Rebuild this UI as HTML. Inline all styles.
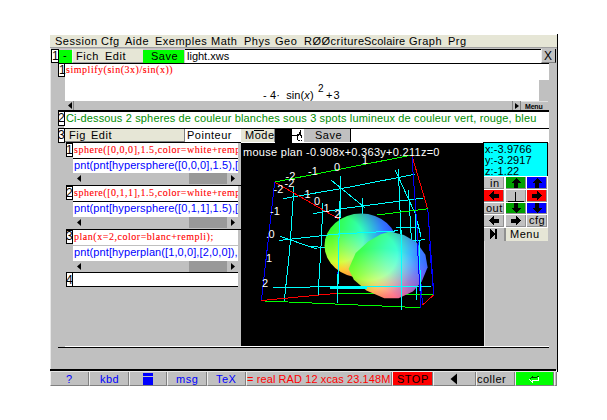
<!DOCTYPE html>
<html><head><meta charset="utf-8">
<style>
html,body{margin:0;padding:0;background:#fff;width:607px;height:420px;overflow:hidden;position:relative}
body{font-family:"Liberation Sans",sans-serif;font-size:11px;line-height:13px;color:#000}
.a{position:absolute;box-sizing:border-box}
.t{position:absolute;white-space:pre;line-height:13px;letter-spacing:0.1px}
.m{letter-spacing:0.5px}
.g{background:#c0c0c0}
.cr{background:#e6e6d6}
.w{background:#fff}
.k{background:#000}
.serif{font-family:"Liberation Serif",serif;-webkit-text-stroke:0.1px #f00}
</style></head><body>
<!-- window base -->
<div class="a g" style="left:50px;top:35px;width:507px;height:335px"></div>
<div class="a k" style="left:557px;top:34px;width:1px;height:338px"></div>
<div class="a k" style="left:50px;top:369px;width:506px;height:2px"></div>
<div class="a" style="left:50px;top:48px;width:1px;height:321px;background:#e8e8e8"></div>

<!-- menu bar -->
<div class="a cr" style="left:50px;top:35px;width:507px;height:12px"></div>
<div class="a" style="left:50px;top:47px;width:507px;height:1px;background:#a0a0a0"></div>
<div class="t m" style="left:55px;top:35px">Session</div>
<div class="t m" style="left:101px;top:35px">Cfg</div>
<div class="t m" style="left:125px;top:35px">Aide</div>
<div class="t m" style="left:155px;top:35px">Exemples</div>
<div class="t m" style="left:211px;top:35px">Math</div>
<div class="t m" style="left:244px;top:35px">Phys</div>
<div class="t m" style="left:275px;top:35px">Geo</div>
<div class="t m" style="left:304px;top:35px">RØØcriture</div>
<div class="t m" style="left:364px;top:35px;letter-spacing:0.2px">Scolaire</div>
<div class="t m" style="left:409px;top:35px">Graph</div>
<div class="t m" style="left:448px;top:35px">Prg</div>

<!-- tab row -->
<div class="a w" style="left:51px;top:49px;width:8px;height:14px;border:1px solid #000"></div>
<div class="t" style="left:52px;top:50px;font-size:12px;letter-spacing:0">1</div>
<div class="a" style="left:59px;top:49px;width:13px;height:14px;background:#00ff00;border-top:1px solid #d0c0d0"></div>
<div class="t" style="left:63px;top:49px">-</div>
<div class="a cr" style="left:72px;top:49px;width:71px;height:14px;border-left:1px solid #f0f0f0;border-bottom:1px solid #a0a0a0"></div>
<div class="t m" style="left:76px;top:50px">Fich</div>
<div class="t m" style="left:105px;top:50px">Edit</div>
<div class="a" style="left:143px;top:49px;width:42px;height:14px;background:#00ff00;border-top:1px solid #d0c0d0;border-right:1px solid #d0c0d0"></div>
<div class="t m" style="left:151px;top:50px">Save</div>
<div class="a w" style="left:185px;top:49px;width:356px;height:14px;border-top:1px solid #000"></div>
<div class="t" style="left:187px;top:50px;letter-spacing:0">light.xws</div>
<div class="a g" style="left:541px;top:49px;width:15px;height:14px;border-left:1px solid #f0f0f0;border-right:1px solid #000;border-bottom:1px solid #808080"></div>
<div class="t" style="left:544px;top:50px;font-size:12px;letter-spacing:0">X</div>
<div class="a k" style="left:58px;top:63px;width:491px;height:1px"></div>

<!-- level 1 -->
<div class="a w" style="left:65px;top:64px;width:484px;height:37px"></div>
<div class="a g" style="left:539px;top:80px;width:10px;height:21px"></div>
<div class="a w" style="left:58px;top:63px;width:7px;height:14px;border:1px solid #000"></div>
<div class="t" style="left:59px;top:64px;font-size:12px;letter-spacing:0">1</div>
<div class="t serif" style="left:66px;top:63px;color:#f00;font-size:10px;letter-spacing:0.53px">simplify(sin(3x)/sin(x))</div>
<div class="t" style="left:263px;top:89px;font-size:11px">- 4·  sin(<i>x</i>)</div>
<div class="t" style="left:318px;top:82px;font-size:10px">2</div>
<div class="t" style="left:326px;top:89px;font-size:11px;letter-spacing:1px">+3</div>
<!-- scrollbar 1 -->
<div class="a g" style="left:65px;top:101px;width:483px;height:9px"></div>
<div class="a" style="left:73px;top:101px;width:1px;height:9px;background:#808080"></div>
<svg class="a" style="left:66px;top:101px" width="8" height="9"><path d="M2 4.5 L6 1 L6 8 Z" fill="#000"/></svg>
<div class="a" style="left:512px;top:101px;width:9px;height:9px;border-left:1px solid #808080;border-right:1px solid #808080"></div>
<svg class="a" style="left:513px;top:101px" width="8" height="9"><path d="M2 2 L6 5 L2 8 Z" fill="#000"/></svg>
<div class="a" style="left:521px;top:101px;width:27px;height:1px;background:#e0e0e0"></div>
<div class="t" style="left:525px;top:101px;font-size:7px;font-weight:bold;letter-spacing:-0.2px;line-height:12px">Menu</div>

<!-- level 2 -->
<div class="a k" style="left:58px;top:110px;width:491px;height:2px"></div>
<div class="a w" style="left:64px;top:112px;width:485px;height:16px"></div>
<div class="a w" style="left:58px;top:112px;width:7px;height:14px;border-left:1px solid #000;border-right:1px solid #000;border-bottom:1px solid #000"></div>
<div class="t" style="left:58px;top:112px;font-size:12px;letter-spacing:0">2</div>
<div class="t" style="left:66px;top:112px;color:#008c00;letter-spacing:0.15px">Ci-dessous 2 spheres de couleur blanches sous 3 spots lumineux de couleur vert, rouge, bleu</div>

<!-- level 3 -->
<div class="a k" style="left:58px;top:128px;width:491px;height:1px"></div>
<div class="a w" style="left:58px;top:129px;width:7px;height:14px;border-left:1px solid #000;border-right:1px solid #000;border-bottom:1px solid #000"></div>
<div class="t" style="left:58px;top:129px;font-size:12px;letter-spacing:0">3</div>
<div class="a cr" style="left:65px;top:129px;width:120px;height:13px;border-right:1px solid #808080;border-bottom:1px solid #808080"></div>
<div class="t m" style="left:69px;top:129px">Fig</div>
<div class="t m" style="left:91px;top:129px">Edit</div>
<div class="a w" style="left:185px;top:129px;width:364px;height:14px"></div>
<div class="t m" style="left:187px;top:129px">Pointeur</div>
<div class="a cr" style="left:241px;top:129px;width:34px;height:13px;border-right:1px solid #808080"></div>
<div class="t m" style="left:245px;top:129px">Mode</div>
<div class="a k" style="left:254px;top:130px;width:10px;height:1px"></div>
<div class="a k" style="left:275px;top:129px;width:17px;height:14px"></div>
<div class="a w" style="left:292px;top:129px;width:12px;height:13px"></div>
<svg class="a" style="left:292px;top:129px" width="12" height="13"><g fill="#000" shape-rendering="crispEdges">
<rect x="0" y="6" width="7" height="1"/><rect x="8" y="1" width="1" height="3"/><rect x="7" y="3" width="2" height="3"/><rect x="5" y="5" width="2" height="2"/><rect x="8" y="6" width="2" height="1"/><rect x="9" y="7" width="1" height="2"/><rect x="5" y="7" width="1" height="2"/><rect x="5" y="9" width="1" height="2"/><rect x="6" y="11" width="2" height="1"/><rect x="9" y="11" width="1" height="1"/>
</g></svg>
<div class="a g" style="left:304px;top:129px;width:47px;height:13px;border-right:1px solid #000"></div>
<div class="t m" style="left:315px;top:129px">Save</div>

<!-- left panel -->
<div class="a g" style="left:58px;top:143px;width:183px;height:203px"></div>
<!-- sublevel 1 -->
<div class="a k" style="left:66px;top:142px;width:175px;height:1px"></div>
<div class="a w" style="left:73px;top:143px;width:165px;height:15px"></div>
<div class="a w" style="left:66px;top:143px;width:7px;height:14px;border:1px solid #000"></div>
<div class="t" style="left:66px;top:144px;font-size:12px;letter-spacing:0">1</div>
<div class="a" style="left:73px;top:143px;width:165px;height:15px;overflow:hidden"><div class="t serif" style="left:1px;top:0px;color:#f00;font-size:10px;letter-spacing:0.53px">sphere([0,0,0],1.5,color=white+rempli);</div></div>
<div class="a k" style="left:73px;top:158px;width:165px;height:1px"></div>
<div class="a w" style="left:73px;top:159px;width:165px;height:14px"></div>
<div class="a" style="left:73px;top:159px;width:165px;height:15px;overflow:hidden"><div class="t" style="left:1px;top:0px;color:#00f">pnt(pnt[hypersphere([0,0,0],1.5),[</div></div>
<div class="a" style="left:74px;top:173px;width:154px;height:11px;background:#c0c0c0"></div>
<div class="a" style="left:189px;top:173px;width:38px;height:11px;background:#999999"></div>
<svg class="a" style="left:74px;top:173px" width="10" height="11"><path d="M3 5.5 L7 2 L7 9 Z" fill="#000"/></svg>
<svg class="a" style="left:227px;top:173px" width="11" height="11"><path d="M4 2 L8 5.5 L4 9 Z" fill="#000"/></svg>
<!-- sublevel 2 -->
<div class="a k" style="left:66px;top:185px;width:175px;height:1px"></div>
<div class="a w" style="left:73px;top:186px;width:165px;height:15px"></div>
<div class="a w" style="left:66px;top:186px;width:7px;height:14px;border:1px solid #000"></div>
<div class="t" style="left:66px;top:187px;font-size:12px;letter-spacing:0">2</div>
<div class="a" style="left:73px;top:186px;width:165px;height:15px;overflow:hidden"><div class="t serif" style="left:1px;top:0px;color:#f00;font-size:10px;letter-spacing:0.53px">sphere([0,1,1],1.5,color=white+rempli);</div></div>
<div class="a k" style="left:73px;top:201px;width:165px;height:1px"></div>
<div class="a w" style="left:73px;top:202px;width:165px;height:15px"></div>
<div class="a" style="left:73px;top:202px;width:165px;height:15px;overflow:hidden"><div class="t" style="left:1px;top:0px;color:#00f">pnt(pnt[hypersphere([0,1,1],1.5),[</div></div>
<svg class="a" style="left:74px;top:217px" width="10" height="11"><path d="M3 5.5 L7 2 L7 9 Z" fill="#000"/></svg>
<div class="a" style="left:189px;top:217px;width:38px;height:11px;background:#999999"></div>
<svg class="a" style="left:227px;top:217px" width="11" height="11"><path d="M4 2 L8 5.5 L4 9 Z" fill="#000"/></svg>
<!-- sublevel 3 -->
<div class="a k" style="left:66px;top:229px;width:175px;height:1px"></div>
<div class="a w" style="left:73px;top:230px;width:165px;height:15px"></div>
<div class="a w" style="left:66px;top:230px;width:7px;height:14px;border:1px solid #000"></div>
<div class="t" style="left:66px;top:230px;font-size:12px;letter-spacing:0">3</div>
<div class="t serif" style="left:74px;top:230px;color:#f00;font-size:10px;letter-spacing:0.53px">plan(x=2,color=blanc+rempli);</div>
<div class="a w" style="left:73px;top:246px;width:165px;height:15px"></div>
<div class="a" style="left:73px;top:246px;width:165px;height:15px;overflow:hidden"><div class="t" style="left:1px;top:0px;color:#00f">pnt(pnt[hyperplan([1,0,0],[2,0,0]),[</div></div>
<svg class="a" style="left:74px;top:261px" width="10" height="11"><path d="M3 5.5 L7 2 L7 9 Z" fill="#000"/></svg>
<div class="a" style="left:189px;top:261px;width:38px;height:11px;background:#999999"></div>
<svg class="a" style="left:227px;top:261px" width="11" height="11"><path d="M4 2 L8 5.5 L4 9 Z" fill="#000"/></svg>
<!-- level 4 -->
<div class="a w" style="left:66px;top:272px;width:172px;height:15px;border-top:1px solid #000;border-bottom:1px solid #000"></div>
<div class="a w" style="left:66px;top:272px;width:7px;height:15px;border:1px solid #000"></div>
<div class="t" style="left:66px;top:274px;font-size:12px;letter-spacing:0">4</div>

<!-- graph -->

<div class="a" style="left:241px;top:143px;width:243px;height:203px;overflow:hidden;background:#000">
<svg width="242" height="203" viewBox="241 143 242 203" style="position:absolute;left:0;top:0">
<g stroke-width="1" fill="none" shape-rendering="crispEdges">
<!-- back lines -->
<path stroke="#00ffff" d="M283.2 198.6 L345 187.9 L415.3 174.2"/>
<path stroke="#00ffff" d="M294 186.8 L289.7 250 L284.3 300.5"/>
<path stroke="#00ffff" d="M323 202.9 L320.8 250 L318 295.7"/>
<path stroke="#00ffff" d="M313.3 213.6 L345 208.3 L423.2 198"/>
<path stroke="#00ffff" d="M279 240.5 L345 233"/>
<path stroke="#00ffff" d="M280 236.2 L316.5 249"/>
<path stroke="#00ffff" d="M331.5 180.4 L365.5 208.2"/>
<path stroke="#00ffff" d="M340.7 176.5 L339.5 250 L337.2 303"/>
<path stroke="#00ffff" d="M398.3 168.6 L401.7 250"/>
<path stroke="#00ffff" d="M395 169.7 L415.3 213.8 L421 236.4"/>
<path stroke="#00ffff" d="M408.5 190 L412 250"/>
<path stroke="#00ffff" d="M396 227.4 L418.7 227"/>
<path stroke="#00ffff" d="M400.6 241 L425.5 239.8"/>
<path stroke="#00ffff" d="M362 198 L362 213.8"/>
<path stroke="#00ffff" d="M415.3 208.2 L417 300"/>
<path stroke="#00ffff" d="M310.8 246.4 L325.2 247.6"/>
<path stroke="#0000ff" d="M340 220.5 L337.2 293.3"/>
<path stroke="#ff0000" d="M274.7 182.1 L339 219"/>
<path stroke="#00ff00" d="M274.7 182.1 L412 155"/>
<path stroke="#ff0000" d="M412 156 L427.8 209.3"/>
<path stroke="#0000ff" d="M412 157.3 L422.5 305"/>
<path stroke="#0000ff" d="M427.8 209.3 L433.8 294.8"/>
<path stroke="#00ff00" d="M376.9 215 L427.8 208.8"/>
<path stroke="#0000ff" d="M274.7 182.1 L261.4 300.5"/>
<path stroke="#ff0000" d="M261.4 300.5 L337.2 293.3"/>
<path stroke="#00ff00" d="M265 301 L421 307.7"/>
<path stroke="#00ff00" d="M337 293.3 L433.8 295"/>
<path stroke="#ff0000" d="M433.8 294.8 L422.5 305"/>
</g>
</svg>
<div style="position:absolute;left:83px;top:70px;width:75px;height:66px;clip-path:polygon(73.5px 32.5px,72.8px 38.7px,70.7px 44.7px,67.3px 50.3px,62.8px 55.1px,57.3px 59.1px,51.0px 62.1px,44.1px 63.9px,37.0px 64.5px,29.9px 63.9px,23.0px 62.1px,16.7px 59.1px,11.2px 55.1px,6.7px 50.3px,3.3px 44.7px,1.2px 38.7px,0.5px 32.5px,1.2px 26.3px,3.3px 20.3px,6.7px 14.7px,11.2px 9.9px,16.7px 5.9px,23.0px 2.9px,29.9px 1.1px,37.0px 0.5px,44.1px 1.1px,51.0px 2.9px,57.3px 5.9px,62.8px 9.9px,67.3px 14.7px,70.7px 20.3px,72.8px 26.3px);background-color:#000;background-image:radial-gradient(ellipse 80% 80% at 25% 105%, rgb(255,0,0) 0%, rgb(255,0,0) 25%, rgb(150,0,0) 60%, rgb(50,0,0) 100%),radial-gradient(ellipse 85% 90% at 20% 40%, rgb(0,255,0) 0%, rgb(0,255,0) 38%, rgb(0,120,0) 72%, rgb(0,50,0) 100%),radial-gradient(ellipse 90% 100% at 100% 30%, rgb(0,0,255) 0%, rgb(0,0,255) 25%, rgb(0,0,190) 55%, rgb(0,0,50) 100%);background-blend-mode:screen,screen,screen"></div>
<div style="position:absolute;left:107px;top:88px;width:81px;height:69px;clip-path:polygon(0.6px 38.0px,7.7px 22.0px,20.2px 10.4px,32.7px 3.3px,41.6px 0.6px,55.9px 4.1px,68.4px 11.3px,77.4px 23.8px,79.6px 36.3px,73.8px 50.6px,64.9px 60.4px,50.6px 67.2px,36.3px 67.2px,18.4px 59.5px,5.9px 48.8px);background-color:#000;background-image:radial-gradient(ellipse 80% 80% at 40% 105%, rgb(255,0,0) 0%, rgb(255,0,0) 25%, rgb(150,0,0) 60%, rgb(60,0,0) 100%),radial-gradient(ellipse 90% 90% at 25% 35%, rgb(0,255,0) 0%, rgb(0,255,0) 40%, rgb(0,130,0) 70%, rgb(0,60,0) 100%),radial-gradient(ellipse 90% 100% at 95% 40%, rgb(0,0,255) 0%, rgb(0,0,255) 20%, rgb(0,0,180) 55%, rgb(0,0,50) 100%);background-blend-mode:screen,screen,screen"></div>
<svg width="242" height="203" viewBox="241 143 242 203" style="position:absolute;left:0;top:0">
<g stroke-width="1" fill="none" shape-rendering="crispEdges">
<path stroke="#00ffff" d="M340.7 176.5 L337.2 303"/>
<path stroke="#00ffff" d="M279 240.5 L335 234.2 L398.3 230.8"/>
<path stroke="#00ffff" d="M273.5 287.3 L433 286"/>
<path stroke="#00ffff" d="M330 287 L367 287" stroke-width="3"/>
<path stroke="#00ffff" d="M401.7 230 L402 310"/>
<path stroke="#00ffff" d="M419 240 L421 300"/>
<path stroke="#0000ff" d="M417.3 244 L421 307.7"/>
<path stroke="#0000ff" d="M429.4 244 L433.8 294.8"/>
</g>
</svg>
<div style="position:absolute;left:2px;top:3px;color:#fff;white-space:pre;line-height:13px;letter-spacing:0.28px">mouse plan -0.908x+0.363y+0.211z=0</div>
<div style="position:absolute;left:44.5px;top:27px;color:#fff;white-space:pre;line-height:13px">-2</div>
<div style="position:absolute;left:43.5px;top:34px;color:#fff;white-space:pre;line-height:13px">-2</div>
<div style="position:absolute;left:32.5px;top:40px;color:#fff;white-space:pre;line-height:13px">-2</div>
<div style="position:absolute;left:67px;top:22px;color:#fff;white-space:pre;line-height:13px">-1</div>
<div style="position:absolute;left:93px;top:18px;color:#fff;white-space:pre;line-height:13px">0</div>
<div style="position:absolute;left:121px;top:11px;color:#fff;white-space:pre;line-height:13px">1</div>
<div style="position:absolute;left:63.5px;top:45px;color:#fff;white-space:pre;line-height:13px">1</div>
<div style="position:absolute;left:73px;top:52px;color:#fff;white-space:pre;line-height:13px">0</div>
<div style="position:absolute;left:82.5px;top:59px;color:#fff;white-space:pre;line-height:13px">1</div>
<div style="position:absolute;left:93.5px;top:65px;color:#fff;white-space:pre;line-height:13px">2</div>
<div style="position:absolute;left:29px;top:62px;color:#fff;white-space:pre;line-height:13px">-1</div>
<div style="position:absolute;left:25px;top:85px;color:#fff;white-space:pre;line-height:13px;letter-spacing:-0.5px">.0</div>
<div style="position:absolute;left:25px;top:109px;color:#fff;white-space:pre;line-height:13px">1</div>
<div style="position:absolute;left:21px;top:134px;color:#fff;white-space:pre;line-height:13px">2</div>

</div>


<!-- right panel -->
<div class="a" style="left:483px;top:142px;width:65px;height:34px;background:#0ff;border-top:1px solid #000;border-left:1px solid #000;border-right:1px solid #000"></div>
<div class="t" style="left:485px;top:143px">x:-3.9766</div>
<div class="t" style="left:485px;top:154px">y:-3.2917</div>
<div class="t" style="left:485px;top:165px">z:-1.22</div>
<div class="a" style="left:484px;top:176px;width:64px;height:65px;background:#ffffff;"></div>
<div class="a" style="left:484px;top:177px;width:20px;height:12px;background:#c0c0c0;border-right:1px solid #909090;border-bottom:1px solid #909090"></div>
<div class="a" style="left:506px;top:177px;width:20px;height:12px;background:#00a000;border-right:1px solid #909090;border-bottom:1px solid #909090"></div>
<div class="a" style="left:527px;top:177px;width:20px;height:12px;background:#0000ff;border-right:1px solid #909090;border-bottom:1px solid #909090"></div>
<div class="a" style="left:484px;top:190px;width:20px;height:12px;background:#ff0000;border-right:1px solid #909090;border-bottom:1px solid #909090"></div>
<div class="a" style="left:506px;top:190px;width:20px;height:12px;background:#c0c0c0;border-right:1px solid #909090;border-bottom:1px solid #909090"></div>
<div class="a" style="left:527px;top:190px;width:20px;height:12px;background:#ff0000;border-right:1px solid #909090;border-bottom:1px solid #909090"></div>
<div class="a" style="left:484px;top:203px;width:20px;height:11px;background:#c0c0c0;border-right:1px solid #909090;border-bottom:1px solid #909090"></div>
<div class="a" style="left:506px;top:203px;width:20px;height:11px;background:#00a000;border-right:1px solid #909090;border-bottom:1px solid #909090"></div>
<div class="a" style="left:527px;top:203px;width:20px;height:11px;background:#0000ff;border-right:1px solid #909090;border-bottom:1px solid #909090"></div>
<div class="a" style="left:484px;top:215px;width:20px;height:12px;background:#c0c0c0;border-right:1px solid #909090;border-bottom:1px solid #909090"></div>
<div class="a" style="left:506px;top:215px;width:20px;height:12px;background:#c0c0c0;border-right:1px solid #909090;border-bottom:1px solid #909090"></div>
<div class="a" style="left:527px;top:215px;width:20px;height:12px;background:#c0c0c0;border-right:1px solid #909090;border-bottom:1px solid #909090"></div>
<div class="a" style="left:484px;top:228px;width:21px;height:13px;background:#c0c0c0;border-right:1px solid #909090"></div>
<div class="a" style="left:505px;top:228px;width:43px;height:13px;background:#e6e6d6;border-left:1px solid #909090"></div>
<div class="t m" style="left:490px;top:177px">in</div>
<div class="t m" style="left:486px;top:202px">out</div>
<div class="t m" style="left:529px;top:214px">cfg</div>
<div class="t m" style="left:510px;top:228px">Menu</div>
<svg class="a" style="left:0;top:0" width="607" height="420" viewBox="0 0 607 420">
<g fill="#000" shape-rendering="crispEdges">
<path d="M516 178 L521 183 L518 183 L518 188 L514 188 L514 183 L511 183 Z"/>
<path d="M537 178 L542 183 L539 183 L539 188 L535 188 L535 183 L532 183 Z"/>
<path d="M489 195.5 L494 191 L494 193.5 L499 193.5 L499 197.5 L494 197.5 L494 200 Z"/>
<path d="M542 195.5 L537 191 L537 193.5 L532 193.5 L532 197.5 L537 197.5 L537 200 Z"/>
<path d="M516 213 L521 208 L518 208 L518 203 L514 203 L514 208 L511 208 Z"/>
<path d="M537 213 L542 208 L539 208 L539 203 L535 203 L535 208 L532 208 Z"/>
<path d="M489 220.5 L494 216 L494 218.5 L499 218.5 L499 222.5 L494 222.5 L494 225 Z"/>
<path d="M521 220.5 L516 216 L516 218.5 L511 218.5 L511 222.5 L516 222.5 L516 225 Z"/>
<path d="M490 229 L495 234 L490 239 Z"/>
<rect x="495" y="229" width="2" height="10"/>
<rect x="515" y="192" width="1" height="9"/>
<rect x="508" y="201" width="16" height="1"/>
</g></svg>
<div class="a" style="left:484px;top:241px;width:1px;height:105px;background:#e0e0e0"></div>
<!-- bottom line -->
<div class="a" style="left:65px;top:346px;width:484px;height:1px;background:#fff"></div>
<div class="a k" style="left:58px;top:347px;width:491px;height:1px"></div>

<!-- status bar -->
<div class="a" style="left:50px;top:371px;width:507px;height:1px;background:#e8e8e8"></div>
<div class="a" style="left:50px;top:372px;width:39px;height:14px;background:#c0c0c0;border-left:1px solid #f0f0f0;border-right:1px solid #808080;border-bottom:1px solid #808080"></div>
<div class="a" style="left:89px;top:372px;width:40px;height:14px;background:#c0c0c0;border-left:1px solid #f0f0f0;border-right:1px solid #808080;border-bottom:1px solid #808080"></div>
<div class="a" style="left:129px;top:372px;width:38px;height:14px;background:#c0c0c0;border-left:1px solid #f0f0f0;border-right:1px solid #808080;border-bottom:1px solid #808080"></div>
<div class="a" style="left:167px;top:372px;width:40px;height:14px;background:#c0c0c0;border-left:1px solid #f0f0f0;border-right:1px solid #808080;border-bottom:1px solid #808080"></div>
<div class="a" style="left:207px;top:372px;width:39px;height:14px;background:#c0c0c0;border-left:1px solid #f0f0f0;border-right:1px solid #808080;border-bottom:1px solid #808080"></div>
<div class="a" style="left:246px;top:372px;width:146px;height:14px;background:#c0c0c0;border-left:1px solid #f0f0f0;border-right:1px solid #808080;border-bottom:1px solid #808080"></div>
<div class="a" style="left:392px;top:372px;width:41px;height:14px;background:#ff0000;border-left:1px solid #f0f0f0;border-right:1px solid #808080;border-bottom:1px solid #808080"></div>
<div class="a" style="left:433px;top:372px;width:43px;height:14px;background:#c0c0c0;border-left:1px solid #f0f0f0;border-right:1px solid #808080;border-bottom:1px solid #808080"></div>
<div class="a" style="left:476px;top:372px;width:39px;height:14px;background:#c0c0c0;border-left:1px solid #f0f0f0;border-right:1px solid #808080;border-bottom:1px solid #808080"></div>
<div class="a" style="left:515px;top:372px;width:39px;height:14px;background:#00ff00;border-left:1px solid #f0f0f0;border-right:1px solid #808080;border-bottom:1px solid #808080"></div>
<div class="a" style="left:554px;top:372px;width:3px;height:14px;background:#c0c0c0;border-left:1px solid #f0f0f0;border-right:1px solid #808080;border-bottom:1px solid #808080"></div>
<div class="t m" style="left:66px;top:373px;color:#00f">?</div>
<div class="t m" style="left:100px;top:373px;color:#00f">kbd</div>
<div class="a" style="left:143px;top:373px;width:10px;height:3px;background:#0000ff"></div>
<div class="a" style="left:143px;top:377px;width:10px;height:8px;background:#0000ff"></div>
<div class="t m" style="left:176px;top:373px;color:#00f">msg</div>
<div class="t m" style="left:216px;top:373px;color:#00f">TeX</div>
<div class="a" style="left:247px;top:372px;width:144px;height:13px;overflow:hidden"><div class="t" style="left:0;top:1px;color:#f00">= real RAD 12 xcas 23.148M</div></div>
<div class="t m" style="left:397px;top:373px">STOP</div>
<svg class="a" style="left:450px;top:373px" width="8" height="12"><path d="M0.5 6 L7 0.5 L7 11.5 Z" fill="#000"/></svg>
<div class="t m" style="left:477px;top:373px">coller</div>
<svg class="a" style="left:0;top:0" width="607" height="420"><g fill="none" stroke-width="1" shape-rendering="crispEdges">
<path d="M529.5 379.5 L532.5 376.5 L532.5 377.5 L536.5 377.5 L537.5 376.5 L538.5 376.5" stroke="#000" stroke-opacity="0.75"/>
<path d="M538.5 377 L538.5 380.5 L532.5 380.5 L532.5 382.5 L529.5 379.5" stroke="#fff"/>
</g></svg>
</body></html>
